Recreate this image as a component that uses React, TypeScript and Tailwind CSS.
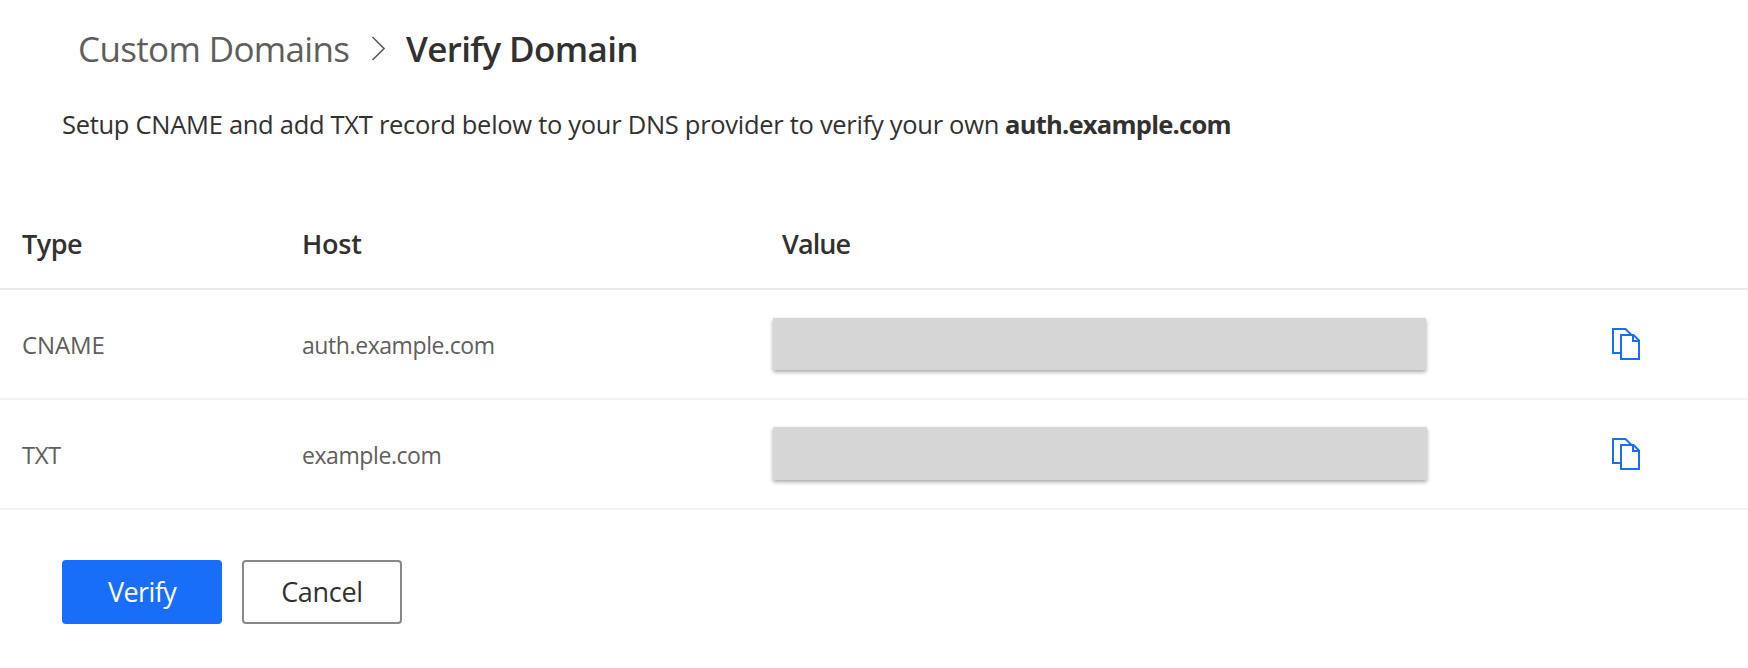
interface DnsRecord {
  type: string;
  typeClass: string;
  host: string;
  barClass: string;
}

const records: DnsRecord[] = [
  {
    type: 'CNAME',
    typeClass: 'tracking-[-0.1px]',
    host: 'auth.example.com',
    barClass: 'mt-[28px] h-[52px] w-[653px]',
  },
  {
    type: 'TXT',
    typeClass: 'tracking-[-0.54px]',
    host: 'example.com',
    barClass: 'mt-[27px] h-[53px] w-[654px]',
  },
];

function ChevronIcon() {
  return (
    <svg className="mt-[9px] ml-[21px] h-[25px] w-[15px]" viewBox="0 0 15 25" fill="none" stroke="#605e5c" strokeWidth="1.7">
      <path d="M1.5 1L13 12.5L1.5 24" />
    </svg>
  );
}

function CopyIcon() {
  return (
    <svg className="h-8 w-7" viewBox="0 0 28 32" fill="none" stroke="#186ef8" strokeWidth="2">
      <path d="M9 25H1V1H13.5L19.5 7" />
      <path d="M9 7H21.5L27 12.5V31H9Z" />
      <path d="M21 7V13H27" />
    </svg>
  );
}

function RecordRow({ record }: { record: DnsRecord }) {
  return (
    <div className="flex h-[110px] border-b-2 border-[#f2f2f2] text-[23px] leading-[110px] text-[#605e5c]">
      <div className={`w-[280px] pl-[22px] text-[24px] ${record.typeClass}`}>{record.type}</div>
      <div className="w-[493px] pl-[22px] tracking-[-0.42px]">{record.host}</div>
      <div className="w-[839px]">
        <div className={`bg-[#d6d6d6] shadow-[0_2px_4px_rgba(0,0,0,0.35)] ${record.barClass}`} />
      </div>
      <button aria-label="Copy value" className="mt-[38px] h-8 w-7">
        <CopyIcon />
      </button>
    </div>
  );
}

export default function App() {
  return (
    <main className="h-[668px] overflow-hidden bg-white font-['Open_Sans',sans-serif] text-[#323130]">
      <nav className="flex h-[70px] pt-[27px] pl-[78px] text-[35px] leading-[44px] whitespace-nowrap">
        <span className="w-[272px] tracking-[-0.65px] text-[#605e5c]">Custom Domains</span>
        <ChevronIcon />
        <h1 className="ml-[20px] font-semibold tracking-[-0.62px]">Verify Domain</h1>
      </nav>
      <p className="mt-9 flex h-[93px] pl-[62px] text-[25.5px] leading-[36px] whitespace-nowrap">
        <span className="w-[943px] tracking-[-0.29px]">
          Setup CNAME and add TXT record below to your DNS provider to verify your own
        </span>
        <strong className="font-bold tracking-[-0.75px]">auth.example.com</strong>
      </p>
      <section>
        <div className="flex h-[91px] border-b-2 border-[#eaeaea] text-[27px] leading-[89px] font-semibold">
          <div className="w-[280px] pl-[22px] tracking-[-0.5px]">Type</div>
          <div className="w-[493px] pl-[22px] tracking-[-0.2px]">Host</div>
          <div className="pl-[9px] tracking-[-0.9px]">Value</div>
        </div>
        {records.map((record) => (
          <RecordRow key={record.type} record={record} />
        ))}
      </section>
      <div className="mt-[50px] flex gap-5 pl-[62px] text-[27px]">
        <button className="h-16 w-40 rounded-[4px] bg-[#186ef8] tracking-[-0.6px] text-white">Verify</button>
        <button className="h-16 w-40 rounded-[4px] border-2 border-[#8a8886] tracking-[-0.3px]">Cancel</button>
      </div>
    </main>
  );
}
